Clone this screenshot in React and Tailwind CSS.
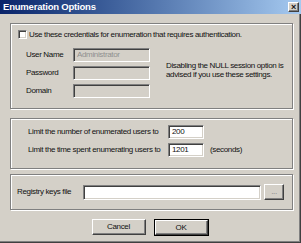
import React from "react";

const sunken =
  "border border-t-[#808080] border-l-[#808080] border-b-white border-r-white shadow-[inset_1px_1px_0_#404040,inset_-1px_-1px_0_#d4d0c8]";
const raised =
  "border border-t-white border-l-white border-b-[#404040] border-r-[#404040] shadow-[inset_-1px_-1px_0_#808080]";
const group =
  "border border-[#808080] shadow-[inset_1px_1px_0_#fff,1px_1px_0_#fff]";

export default function App() {
  return (
    <div className="w-[301px] h-[243px] bg-[#d4d0c8] flex flex-col font-['Liberation_Sans',sans-serif] text-[8px] tracking-[-0.35px] text-[#111] leading-none whitespace-nowrap">
      <div className="h-[14px] shrink-0 flex items-center justify-between bg-linear-to-r from-[#0a246a] to-[#a6caf0] pl-[3px] pr-[2px]">
        <span className="text-white font-bold text-[9.5px] tracking-[-0.2px]">Enumeration Options</span>
        <div className={`w-[11px] h-[10px] bg-[#d4d0c8] flex items-center justify-center text-[9px] font-bold ${raised}`}>
          ×
        </div>
      </div>
      <div className="flex-1 flex flex-col pl-[10px] pr-[7px] border-r border-b border-r-[#404040] border-b-[#404040] shadow-[inset_-1px_-1px_0_#808080]">
        <div className={`mt-[9px] h-[86px] ${group} flex flex-col pt-[6px]`}>
          <div className="flex items-center pl-[7px] h-[9px]">
            <div className={`w-[9px] h-[9px] bg-white ${sunken}`}></div>
            <span className="ml-[2px]">Use these credentials for enumeration that requires authentication.</span>
          </div>
          <div className="flex mt-[9px]">
            <div className="flex flex-col gap-[4px] pl-[15px]">
              {[
                ["User Name", "Administrator"],
                ["Password", ""],
                ["Domain", ""],
              ].map(([l, v]) => (
                <div key={l} className="flex items-center h-[14px]">
                  <span className="w-[47px]">{l}</span>
                  <div className={`w-[77px] h-[14px] bg-[#d4d0c8] flex items-center pl-[3px] text-[#909090] ${sunken}`}>
                    {v}
                  </div>
                </div>
              ))}
            </div>
            <div className="ml-[16px] mt-[13px] leading-[9px]">
              <div>Disabling the NULL session option is</div>
              <div>advised if you use these settings.</div>
            </div>
          </div>
        </div>
        <div className={`mt-[9px] h-[51px] ${group} flex flex-col pt-[6px] pl-[17px] gap-[4px]`}>
          <div className="flex items-center h-[14px]">
            <span className="w-[140px]">Limit the number of enumerated users to</span>
            <div className={`w-[36px] h-[14px] bg-white flex items-center pl-[3px] ${sunken}`}>200</div>
          </div>
          <div className="flex items-center h-[14px]">
            <span className="w-[140px]">Limit the time spent enumerating users to</span>
            <div className={`w-[36px] h-[14px] bg-white flex items-center pl-[3px] ${sunken}`}>1201</div>
            <span className="ml-[6px]">(seconds)</span>
          </div>
        </div>
        <div className={`mt-[5px] h-[36px] ${group} flex items-center pl-[6px]`}>
          <span className="w-[66px]">Registry keys file</span>
          <div className={`w-[178px] h-[15px] bg-white ${sunken}`}></div>
          <div className={`ml-[3px] w-[20px] h-[16px] flex items-center justify-center text-[#808080] ${raised}`}>...</div>
        </div>
        <div className="mt-[9px] flex justify-center gap-[8px] pr-[3px]">
          <div className={`w-[54px] h-[16px] flex items-center justify-center ${raised}`}>Cancel</div>
          <div className="w-[55px] h-[17px] border border-black">
            <div className={`w-full h-full flex items-center justify-center ${raised}`}>OK</div>
          </div>
        </div>
      </div>
    </div>
  );
}
